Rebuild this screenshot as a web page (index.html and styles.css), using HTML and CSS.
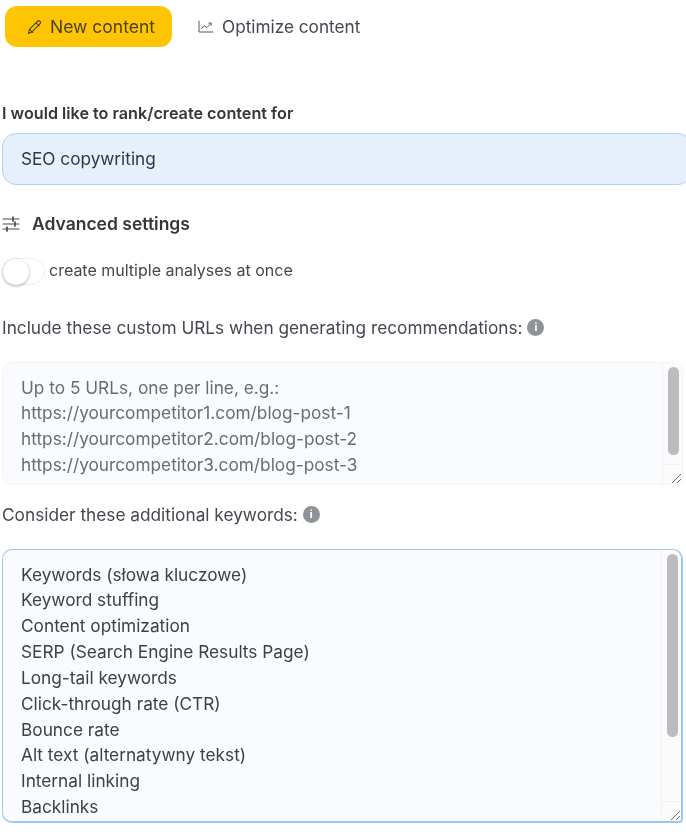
FILE: index.html
```html
<!DOCTYPE html>
<html lang="en">
<head>
<meta charset="utf-8">
<title>New content</title>
<link rel="stylesheet" href="styles.css">
</head>
<body>
<main class="page">
  <nav class="tabs">
    <button class="tab tab-active">
      <svg class="tab-icon" viewBox="0 0 16 16" fill="none" stroke="currentColor" stroke-width="1.1" stroke-linejoin="round" stroke-linecap="round"><path d="M1.600 14.400l.9-4 7.900-8c.8-.8 1.900-.8 2.600-.1s.7 1.800-.1 2.600l-8 8z"/><path d="M9.200 3.800l3 3M2.500 10.400l3.300 3"/></svg>
      New content
    </button>
    <button class="tab">
      <svg class="tab-icon-small" viewBox="0 0 16 13" fill="none" stroke="currentColor" stroke-width="1" stroke-linejoin="round" stroke-linecap="round"><path d="M1 1v11h14"/><path d="M3.200 8.600l3-2.800 2.600 1.800 4.200-4.200"/><path d="M10.800 3h2.400v2.200"/></svg>
      Optimize content
    </button>
  </nav>

  <label class="field-label">I would like to rank/create content for</label>
  <div class="topic-input">SEO copywriting</div>

  <div class="advanced">
    <svg class="sliders" viewBox="0 0 18 16" fill="none" stroke="currentColor" stroke-width="1.100" stroke-linecap="round"><path d="M1 3h16M1 8h16M1 13h16"/><path d="M11 1v4M13 6v4M5 11v4" stroke-width="1.700"/></svg>
    <span class="advanced-title">Advanced settings</span>
  </div>

  <div class="toggle-row">
    <span class="toggle"><span class="knob"></span></span>
    <span class="toggle-text">create multiple analyses at once</span>
  </div>

  <p class="prompt prompt-urls">Include these custom URLs when generating recommendations: <span class="info">i</span></p>
  <div class="textbox textbox-urls">
    <div class="textbox-text placeholder">
      <div>Up to 5 URLs, one per line, e.g.:</div>
      <div>https://yourcompetitor1.com/blog-post-1</div>
      <div>https://yourcompetitor2.com/blog-post-2</div>
      <div>https://yourcompetitor3.com/blog-post-3</div>
    </div>
    <div class="scrollbar">
      <div class="scroll-track"><div class="thumb thumb-urls"></div></div>
      <div class="corner"><svg viewBox="0 0 12 12" class="grip" fill="none" stroke="#666" stroke-width="1"><path d="M2 11L11 2M7 11l4-4"/></svg></div>
    </div>
  </div>

  <p class="prompt prompt-keywords">Consider these additional keywords: <span class="info">i</span></p>
  <div class="textbox textbox-keywords">
    <div class="textbox-text">
      <div>Keywords (słowa kluczowe)</div>
      <div>Keyword stuffing</div>
      <div>Content optimization</div>
      <div>SERP (Search Engine Results Page)</div>
      <div>Long-tail keywords</div>
      <div>Click-through rate (CTR)</div>
      <div>Bounce rate</div>
      <div>Alt text (alternatywny tekst)</div>
      <div>Internal linking</div>
      <div>Backlinks</div>
    </div>
    <div class="scrollbar">
      <div class="scroll-track"><div class="thumb thumb-keywords"></div></div>
      <div class="corner"><svg viewBox="0 0 12 12" class="grip" fill="none" stroke="#666" stroke-width="1"><path d="M2 11L11 2M7 11l4-4"/></svg></div>
    </div>
  </div>
</main>
</body>
</html>
```
FILE: styles.css
```css
* { box-sizing: border-box; }
html, body { margin: 0; padding: 0; background: #fff; }
body {
  width: 686px;
  height: 832px;
  overflow: hidden;
  font-family: Inter, "Liberation Sans", sans-serif;
  font-size: 17.2px;
  color: #3f4248;
}
.page { display: flex; flex-direction: column; padding-top: 6px; filter: blur(.35px); }

.tabs { display: flex; align-items: center; padding-left: 5px; gap: 26px; }
.tab {
  display: flex;
  align-items: center;
  border: 0;
  background: none;
  padding: 0;
  font: inherit;
  color: #44474f;
  gap: 8px;
  height: 41px;
}
.tab-active {
  width: 167px;
  padding-left: 22px;
  background: #ffc505;
  border-radius: 12px;
  color: #4a4318;
  font-size: 17.5px;
  gap: 7px;
}
.tab-icon { width: 16px; height: 16px; }
.tab-icon-small { width: 16px; height: 13px; color: #55585f; }

.field-label {
  margin: 56px 0 0 2px;
  font-size: 16.2px;
  font-weight: 600;
  line-height: 20px;
  color: #33363b;
}
.topic-input {
  margin: 10px 0 0 2px;
  width: 690px;
  height: 52px;
  padding: 0 0 2px 18px;
  display: flex;
  align-items: center;
  background: #e6f0fd;
  border: 1.5px solid #b3d1f2;
  border-radius: 14px;
  color: #33363c;
}

.advanced {
  display: flex;
  align-items: center;
  margin: 27px 0 0 2px;
  height: 24px;
  gap: 12px;
  font-size: 17.5px;
  font-weight: 600;
  color: #33363b;
}
.advanced-title { padding-bottom: 2px; }
.sliders { width: 18px; height: 16px; color: #4a4d52; }

.toggle-row {
  display: flex;
  align-items: center;
  gap: 4px;
  margin: 22px 0 0 2px;
  height: 27px;
  font-size: 16px;
  color: #44474f;
}
.toggle-text { padding-bottom: 3px; }
.toggle {
  display: block;
  width: 43px;
  height: 27px;
  border: 1px solid #eceef1;
  border-radius: 14px;
  background: #fff;
  padding: 0;
}
.knob {
  display: block;
  width: 26px;
  height: 26px;
  border-radius: 50%;
  background: #fff;
  box-shadow: 0 1px 3px rgba(0, 0, 0, .35);
}

.prompt {
  display: flex;
  align-items: center;
  margin: 0 0 0 2px;
  height: 24px;
  font-size: 17.25px;
  color: #44474f;
  white-space: pre;
}
.prompt-urls { margin-top: 30px; }
.prompt-keywords { margin-top: 17px; }
.info {
  width: 17px;
  height: 17px;
  border-radius: 50%;
  background: #8f9297;
  color: #fff;
  font-size: 10px;
  font-weight: 800;
  line-height: 17px;
  text-align: center;
}

.textbox {
  display: flex;
  margin-left: 2px;
  width: 681px;
  background: #fafbfe;
  border-radius: 10px 10px 4px 10px;
  overflow: hidden;
  color: #3d4046;
}
.textbox-urls {
  margin-top: 23px;
  height: 123px;
  border: 1px solid #f2f3f6;
}
.textbox-keywords {
  margin-top: 23px;
  height: 274px;
  border: 1.5px solid #9cc8f0;
  border-right-width: 2px;
  border-bottom-width: 2px;
}
.textbox-text {
  flex: 1;
  padding: 11.5px 0 0 18px;
  font-size: 17.25px;
  line-height: 25.85px;
}
.placeholder { color: #696c72; }
.scrollbar {
  width: 20px;
  display: flex;
  flex-direction: column;
  background: #fbfbfc;
  border-left: 1px solid #f0f1f3;
}
.scroll-track { flex: 1; padding: 4px 3px 0 5px; }
.thumb { background: #bcbcbe; border-radius: 6px; }
.thumb-urls { height: 88px; }
.thumb-keywords { height: 183px; }
.corner {
  height: 20px;
  border-top: 1px solid #f0f1f3;
  display: flex;
  align-items: flex-end;
  justify-content: flex-end;
}
.grip { width: 12px; height: 12px; }
```
